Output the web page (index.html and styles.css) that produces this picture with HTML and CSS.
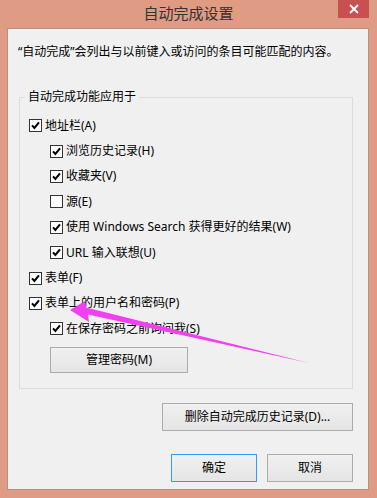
FILE: index.html
```html
<!DOCTYPE html>
<html lang="zh-CN">
<head>
<meta charset="utf-8">
<title>自动完成设置</title>
<link rel="stylesheet" href="styles.css">
</head>
<body>
<div class="window">
  <div class="titlebar">
    <span class="spacer"></span>
    <span class="title">自动完成设置</span>
    <span class="close-wrap">
      <span class="close">
        <svg width="10" height="10" viewBox="0 0 10 10"><path d="M1 1 L9 9 M9 1 L1 9" stroke="#fff" stroke-width="1.8" fill="none"/></svg>
      </span>
    </span>
  </div>
  <div class="client">
    <p class="desc">“自动完成”会列出与以前键入或访问的条目可能匹配的内容。</p>
    <fieldset class="group">
      <legend>自动完成功能应用于</legend>
      <div class="row lv1"><span class="cb on"><svg viewBox="0 0 11 11"><path d="M2 5.4 L4.4 8 L9 2.4"/></svg></span><span>地址栏(A)</span></div>
      <div class="row lv2"><span class="cb on"><svg viewBox="0 0 11 11"><path d="M2 5.4 L4.4 8 L9 2.4"/></svg></span><span>浏览历史记录(H)</span></div>
      <div class="row lv2"><span class="cb on"><svg viewBox="0 0 11 11"><path d="M2 5.4 L4.4 8 L9 2.4"/></svg></span><span>收藏夹(V)</span></div>
      <div class="row lv2"><span class="cb"></span><span>源(E)</span></div>
      <div class="row lv2"><span class="cb on"><svg viewBox="0 0 11 11"><path d="M2 5.4 L4.4 8 L9 2.4"/></svg></span><span>使用 Windows Search 获得更好的结果(W)</span></div>
      <div class="row lv2"><span class="cb on"><svg viewBox="0 0 11 11"><path d="M2 5.4 L4.4 8 L9 2.4"/></svg></span><span>URL 输入联想(U)</span></div>
      <div class="row lv1"><span class="cb on"><svg viewBox="0 0 11 11"><path d="M2 5.4 L4.4 8 L9 2.4"/></svg></span><span>表单(F)</span></div>
      <div class="row lv1"><span class="cb on"><svg viewBox="0 0 11 11"><path d="M2 5.4 L4.4 8 L9 2.4"/></svg></span><span>表单上的用户名和密码(P)</span></div>
      <div class="row lv2"><span class="cb on"><svg viewBox="0 0 11 11"><path d="M2 5.4 L4.4 8 L9 2.4"/></svg></span><span>在保存密码之前询问我(S)</span></div>
      <div class="manage"><button class="btn btn-manage">管理密码(M)</button></div>
    </fieldset>
    <div class="actions"><button class="btn btn-wide">删除自动完成历史记录(D)...</button></div>
    <div class="footer">
      <button class="btn btn-default">确定</button>
      <button class="btn">取消</button>
    </div>
  </div>
</div>
<svg class="arrow" width="377" height="498" viewBox="0 0 377 498">
  <polygon points="70,310 85,301 86,307.5 309,363 88,314.5 89,322" fill="#f23ff2"/>
</svg>
</body>
</html>
```

FILE: styles.css
```css
html, body {
  margin: 0;
  padding: 0;
}
body {
  width: 377px;
  height: 498px;
  background: #df9b84;
  font-family: "Noto Sans", "Noto Sans CJK SC", sans-serif;
  font-size: 12px;
  color: #000;
  position: relative;
  overflow: hidden;
}
.window {
  width: 377px;
  height: 498px;
  display: flex;
  flex-direction: column;
}
.titlebar {
  height: 28px;
  flex: none;
  display: grid;
  grid-template-columns: 1fr auto 1fr;
  align-items: start;
}
.title {
  font-size: 15px;
  line-height: 20px;
  margin-top: 3px;
  color: #333;
}
.close-wrap {
  display: flex;
  justify-content: flex-end;
  padding-right: 8px;
}
.close {
  width: 31px;
  height: 18px;
  background: #c75050;
  display: flex;
  align-items: center;
  justify-content: center;
}
.close svg {
  display: block;
}
.client {
  flex: 1;
  margin: 0 8px 8px 7px;
  background: #f0f0f0;
  border: 1px solid #b8907f;
  display: flex;
  flex-direction: column;
}
.desc {
  margin: 15px 0 0 10px;
  line-height: 16px;
}
.group {
  margin: 29px 0 0 11px;
  width: 334px;
  box-sizing: border-box;
  border: 1px solid #dcdcdc;
  padding: 8px 0 15px 0;
  min-width: 0;
}
.group legend {
  margin-left: 5px;
  padding: 0 3px;
  line-height: 16px;
}
.row {
  height: 25.4px;
  display: flex;
  align-items: center;
  gap: 3px;
  line-height: 16px;
  white-space: nowrap;
}
.row.lv1 {
  padding-left: 9px;
}
.row.lv2 {
  padding-left: 30px;
}
.cb {
  width: 13px;
  height: 13px;
  box-sizing: border-box;
  border: 1px solid #333;
  background: #fff;
  flex: none;
  display: flex;
  align-items: center;
  justify-content: center;
}
.cb svg {
  width: 11px;
  height: 11px;
  display: block;
}
.cb svg path {
  fill: none;
  stroke: #000;
  stroke-width: 2.1;
}
.manage {
  padding-left: 30px;
  margin-top: 5px;
}
.btn {
  font-family: "Noto Sans", "Noto Sans CJK SC", sans-serif;
  font-size: 12px;
  color: #000;
  background: linear-gradient(#f0f0f0, #e5e5e5);
  border: 1px solid #acacac;
  border-radius: 0;
  padding: 0;
  margin: 0;
  box-sizing: border-box;
  line-height: 16px;
}
.btn-manage {
  width: 138px;
  height: 26px;
}
.actions {
  display: flex;
  justify-content: flex-end;
  padding-right: 15px;
  margin-top: 14px;
}
.btn-wide {
  width: 191px;
  height: 28px;
}
.footer {
  display: flex;
  justify-content: flex-end;
  gap: 10px;
  padding-right: 15px;
  margin-top: 23px;
}
.footer .btn {
  width: 86px;
  height: 28px;
}
.btn-default {
  border-color: #3399ff;
}
.arrow {
  position: absolute;
  left: 0;
  top: 0;
  pointer-events: none;
}
```
